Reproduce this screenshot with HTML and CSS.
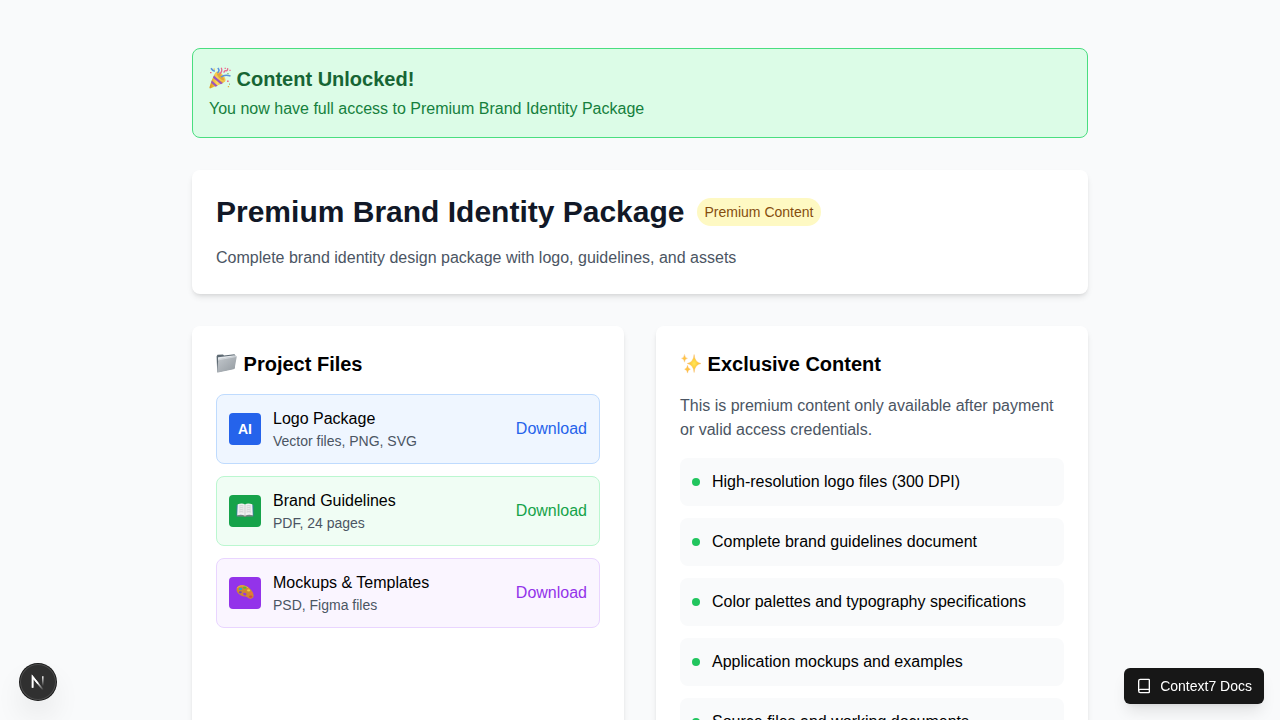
FILE: index.html
```html
<!DOCTYPE html>
<html lang="en">
<head>
<meta charset="utf-8">
<meta name="viewport" content="width=device-width, initial-scale=1">
<title>Premium Brand Identity Package</title>
<link rel="stylesheet" href="styles.css">
</head>
<body>
<main class="page">
  <section class="banner">
    <h2 class="banner-title"><svg class="emoji" viewBox="0 0 22 22" aria-hidden="true">
      <defs><linearGradient id="cone" x1="0" x2="1"><stop offset="0" stop-color="#d99213"/><stop offset=".5" stop-color="#ffdc5a"/><stop offset="1" stop-color="#dc961c"/></linearGradient></defs>
      <path d="M6.5 5.5 15.8 14.8Q10 18.5 1 21.5Q.2 21 .5 20.2Q3.2 11 6.5 5.5Z" fill="url(#cone)"/>
      <path d="M5 8.5 13.8 16.2 11.8 17.3 4 10.8ZM2.8 13.5 8.7 18.8 6.6 19.7 2 15.8Z" fill="#9b55bd"/>
      <path d="M7 5Q10 3.4 14 8Q18 12.6 15.8 14.8Q13.5 16 9.4 11.6Q5.2 7.5 7 5Z" fill="#f4c94e"/>
      <path d="M8 6.2Q10 5.8 13 9Q16 12.5 15 13.6Q12.5 13.4 9.8 10.6Q7.4 8 8 6.2Z" fill="#e3a83a"/>
      <path d="M2 1.2Q3.5 3.5 5.8 4.2M8.5 6Q11.3 3.5 8.8 1M12 10Q15.5 7.2 21.5 9" fill="none" stroke="#5b92dc" stroke-width="1.6"/>
      <path d="M10.5 7.5Q14 4 12.2.8M15 5.8Q15.2 3.3 17 3.8Q18.9 3.9 18.6 1.1" fill="none" stroke="#e8668f" stroke-width="1.3"/>
      <path d="M1 5h1.5v1.3H1zM15.6.8h1.2v1.3h-1.2zM20.4 2.7h1.2V4h-1.2zM18.1 13.5h1.5V15h-1.5z" fill="#ed6186"/>
      <path d="M4.6 1.5h1.2v1.2H4.6zM18.8 19h1.3v1.3h-1.3z" fill="#e7b33d"/>
      <path d="M18.3 6h1.3v1.2h-1.3zM20 16.5h1v1.2h-1z" fill="#83ba70"/>
    </svg> Content Unlocked!</h2>
    <p class="banner-text">You now have full access to Premium Brand Identity Package</p>
  </section>

  <header class="card">
    <div class="title-row">
      <h1 class="title">Premium Brand Identity Package</h1>
      <span class="badge">Premium Content</span>
    </div>
    <p class="muted">Complete brand identity design package with logo, guidelines, and assets</p>
  </header>

  <div class="columns">
    <section class="card">
      <h2 class="card-title"><svg class="emoji" viewBox="0 0 22 22" aria-hidden="true">
        <defs><linearGradient id="folder" x1="0" y1="0" x2="1" y2="1"><stop offset="0" stop-color="#c4c9ce"/><stop offset="1" stop-color="#92999f"/></linearGradient></defs>
        <path d="M.6 4.2 1.5 2.8 7 2.4 8 3.6 18.5 2.2 19.6 4 18.5 16.5 1.2 20.2Z" fill="#5d6972"/>
        <path d="M2 5.3 18.8 3.3V6L2 9Z" fill="#e3e7eb"/>
        <path d="M2.2 8.2Q2.3 7.2 3.2 7L19.8 4Q20.9 3.9 20.7 5L18.7 16Q18.5 17 17.5 17.2L2 20.6Q1 20.7 1.1 19.6Z" fill="url(#folder)"/>
        <path d="M2.5 7.8 20.2 4.5" stroke="#dce1e5" stroke-width=".7"/>
      </svg> Project Files</h2>
      <ul class="files">
        <li class="file file-blue">
          <span class="file-icon">AI</span>
          <div class="file-info"><p>Logo Package</p><p class="file-meta">Vector files, PNG, SVG</p></div>
          <button class="download" type="button">Download</button>
        </li>
        <li class="file file-green">
          <span class="file-icon"><svg class="file-emoji" viewBox="0 0 18 16" aria-hidden="true">
            <path d="M.5 3H17.5V14.5H10L9 15.3 8 14.5H.5Z" fill="#377f9c"/>
            <path d="M1.2 13.5H16.8V14.2H10L9 15 8 14.2H1.2Z" fill="#b68a65"/>
            <path d="M1.7 2.2Q6.5.6 9 2.5V13.8Q6 12.2 1.2 13.2ZM16.3 2.2Q11.5.6 9 2.5V13.8Q12 12.2 16.8 13.2Z" fill="#f1f0f1"/>
            <path d="M9 2.5V13.8M3.2 4Q5.5 3.4 7.5 4M3.2 6Q5.5 5.4 7.5 6M3.2 8Q5.5 7.4 7.5 8M3 10Q5.5 9.4 7.5 10M10.5 4Q12.5 3.4 14.8 4M10.5 6Q12.5 5.4 14.8 6M10.5 8Q12.5 7.4 14.8 8M10.5 10Q12.5 9.4 15 10" fill="none" stroke="#b4b5ba" stroke-width=".6"/>
          </svg></span>
          <div class="file-info"><p>Brand Guidelines</p><p class="file-meta">PDF, 24 pages</p></div>
          <button class="download" type="button">Download</button>
        </li>
        <li class="file file-purple">
          <span class="file-icon"><svg class="file-emoji" viewBox="0 0 18 16" aria-hidden="true">
            <path fill-rule="evenodd" d="M.7 4.5C1.7.4 8.5-.3 13 3.7C17.6 7.6 19.4 13 15.5 14.6C13 15.6 11.7 13.1 9.6 12.6C7.7 12.1 6.7 13 4.6 11.3C1.8 9.4 0 7.3.7 4.500ZM7.2 9.3A1.7 1.2 25 1 0 10.3 10.8A1.7 1.2 25 1 0 7.2 9.3Z" fill="#cf8932"/>
            <path d="M1.2 4.2C2.3 1.2 8.5.9 12.5 4.3" fill="none" stroke="#eab354" stroke-width=".9"/>
            <ellipse cx="4.6" cy="4.9" rx="1.7" ry="1.2" fill="#25a8d1"/>
            <ellipse cx="8.8" cy="3.6" rx="1.7" ry="1.2" fill="#57bf2b"/>
            <ellipse cx="12.6" cy="6.4" rx="1.6" ry="1.1" fill="#f4cb3d"/>
            <ellipse cx="15.2" cy="9.3" rx="1.4" ry="1.3" fill="#ec713a"/>
            <ellipse cx="14.7" cy="12.6" rx="1.6" ry="1.2" fill="#d94441"/>
            <ellipse cx="4.3" cy="8.3" rx="1.5" ry="1.1" fill="#754baf"/>
          </svg></span>
          <div class="file-info"><p>Mockups &amp; Templates</p><p class="file-meta">PSD, Figma files</p></div>
          <button class="download" type="button">Download</button>
        </li>
      </ul>
    </section>

    <section class="card">
      <h2 class="card-title"><svg class="emoji" viewBox="0 0 22 22" aria-hidden="true">
        <defs><radialGradient id="spark"><stop offset="0" stop-color="#ffe65a"/><stop offset=".5" stop-color="#ffce3b"/><stop offset="1" stop-color="#f6ad62"/></radialGradient></defs>
        <path d="M14.1 2.5Q14.8 10.5 21 11.500Q14.8 12.5 14.1 20.5Q13.4 12.5 7.2 11.5Q13.4 10.5 14.1 2.5Z" fill="url(#spark)" stroke="#f8bd5b" stroke-width=".4"/>
        <path d="M4.5 2.4Q4.8 5.7 7.5 6.3Q4.8 6.9 4.5 10.2Q4.2 6.9 1.5 6.3Q4.2 5.7 4.5 2.4ZM7.5 13.3Q7.8 16.5 10.4 17.2Q7.8 17.9 7.5 21.1Q7.2 17.9 4.6 17.2Q7.2 16.5 7.5 13.3Z" fill="#ffc445" stroke="#f8b55e" stroke-width=".3"/>
      </svg> Exclusive Content</h2>
      <p class="muted intro">This is premium content only available after payment or valid access credentials.</p>
      <ul class="features">
        <li class="feature">High-resolution logo files (300 DPI)</li>
        <li class="feature">Complete brand guidelines document</li>
        <li class="feature">Color palettes and typography specifications</li>
        <li class="feature">Application mockups and examples</li>
        <li class="feature">Source files and working documents</li>
      </ul>
    </section>
  </div>
</main>

<button class="dev-button" type="button" aria-label="Open developer tools">
  <svg width="36" height="36" viewBox="0 0 36 36" fill="none" aria-hidden="true">
    <defs>
      <linearGradient id="diag" x1="18" y1="18" x2="23" y2="26" gradientUnits="userSpaceOnUse"><stop stop-color="#fff"/><stop offset="1" stop-color="#fff" stop-opacity="0"/></linearGradient>
      <linearGradient id="stem" x1="0" y1="12" x2="0" y2="22" gradientUnits="userSpaceOnUse"><stop stop-color="#fff"/><stop offset="1" stop-color="#fff" stop-opacity="0"/></linearGradient>
    </defs>
    <path d="M12.6 23.8V12.8L23.4 26.200" stroke="url(#diag)" stroke-width="1.6"/>
    <path d="M12.6 23.8V12.8L18 19.5" stroke="#fff" stroke-width="1.6"/>
    <path d="M22.8 12.2V22.5" stroke="url(#stem)" stroke-width="1.5"/>
  </svg>
</button>

<button class="docs-button" type="button">
  <svg width="16" height="16" viewBox="0 0 24 24" fill="none" stroke="currentColor" stroke-width="2" stroke-linecap="round" stroke-linejoin="round" aria-hidden="true"><path d="M4 19.5v-15A2.5 2.5 0 0 1 6.5 2H19a1 1 0 0 1 1 1v18a1 1 0 0 1-1 1H6.5a2.5 2.5 0 0 1 0-5H20"/></svg>
  Context7 Docs
</button>
</body>
</html>
```
FILE: styles.css
```css
* {
  box-sizing: border-box;
  margin: 0;
  padding: 0;
}

body {
  background: #f9fafb;
  color: #000;
  font: 16px/24px "Liberation Sans", Arial, sans-serif;
}

button {
  border: 0;
  background: none;
  font: inherit;
  cursor: pointer;
}

ul {
  list-style: none;
}

.page {
  display: flex;
  flex-direction: column;
  gap: 32px;
  max-width: 928px;
  margin: 0 auto;
  padding: 48px 16px;
}

.banner {
  display: flex;
  flex-direction: column;
  gap: 4px;
  padding: 16px;
  border: 1px solid #4ade80;
  border-radius: 8px;
  background: #dcfce7;
}

.banner-title,
.card-title {
  font-size: 20px;
  line-height: 28px;
  font-weight: 700;
}

.banner-title {
  color: #166534;
}

.banner-text {
  color: #15803d;
}

.emoji {
  width: 22px;
  height: 22px;
  vertical-align: -3px;
}

.card {
  padding: 24px;
  border-radius: 8px;
  background: #fff;
  box-shadow: 0 4px 6px -1px rgba(0, 0, 0, 0.1), 0 2px 4px -2px rgba(0, 0, 0, 0.1);
}

.title-row {
  display: flex;
  flex-wrap: wrap;
  align-items: center;
  gap: 12px;
  margin-bottom: 16px;
}

.title {
  color: #111827;
  font-size: 30px;
  line-height: 36px;
}

.badge {
  padding: 4px 8px;
  border-radius: 14px;
  background: #fef9c3;
  color: #854d0e;
  font-size: 14px;
  line-height: 20px;
}

.muted {
  color: #4b5563;
}

.columns {
  display: grid;
  grid-template-columns: repeat(auto-fit, minmax(min(100%, 320px), 1fr));
  gap: 32px;
}

.card-title,
.intro {
  margin-bottom: 16px;
}

.files,
.features {
  display: flex;
  flex-direction: column;
  gap: 12px;
}

.file {
  display: flex;
  align-items: center;
  gap: 12px;
  padding: 12px;
  border: 1px solid;
  border-radius: 8px;
}

.file-info {
  flex: 1;
}

.file-meta {
  color: #4b5563;
  font-size: 14px;
  line-height: 20px;
}

.file-icon {
  display: flex;
  align-items: center;
  justify-content: center;
  width: 32px;
  height: 32px;
  border-radius: 4px;
  color: #fff;
  font-size: 14px;
  line-height: 20px;
  font-weight: 700;
}

.file-emoji {
  width: 18px;
  height: 16px;
  margin-bottom: 2px;
}

.file-blue {
  border-color: #bfdbfe;
  background: #eff6ff;
}

.file-blue .file-icon {
  background: #2563eb;
}

.file-blue .download {
  color: #2563eb;
}

.file-green {
  border-color: #bbf7d0;
  background: #f0fdf4;
}

.file-green .file-icon {
  background: #16a34a;
}

.file-green .download {
  color: #16a34a;
}

.file-purple {
  border-color: #e9d5ff;
  background: #faf5ff;
}

.file-purple .file-icon {
  background: #9333ea;
}

.file-purple .download {
  color: #9333ea;
}

.feature {
  display: flex;
  align-items: center;
  gap: 12px;
  padding: 12px;
  border-radius: 8px;
  background: #f9fafb;
}

.feature::before {
  content: "";
  width: 8px;
  height: 8px;
  border-radius: 50%;
  background: #22c55e;
}

.dev-button {
  position: fixed;
  bottom: 20px;
  left: 20px;
  display: flex;
  width: 36px;
  height: 36px;
  border-radius: 50%;
  background: #303030;
  box-shadow: 0 0 0 1px #171717, inset 0 0 0 1px rgba(255, 255, 255, 0.14), 0 16px 32px -8px rgba(0, 0, 0, 0.24);
}

.docs-button {
  position: fixed;
  right: 16px;
  bottom: 16px;
  display: flex;
  align-items: center;
  gap: 8px;
  padding: 8px 12px;
  border-radius: 6px;
  background: #171717;
  color: #fff;
  font-size: 14px;
  line-height: 20px;
  box-shadow: 0 10px 15px -3px rgba(0, 0, 0, 0.1), 0 4px 6px -4px rgba(0, 0, 0, 0.1);
}
```
